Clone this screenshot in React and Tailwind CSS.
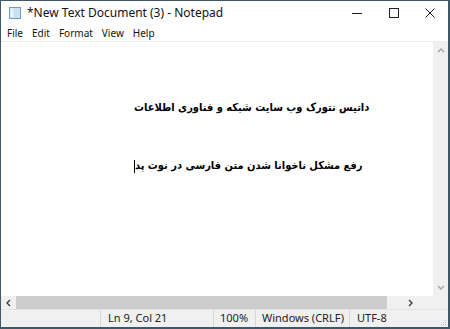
import React from 'react';

const ui = { fontFamily: '"Segoe UI", "Noto Sans", "Liberation Sans", sans-serif' };
const fa = { fontFamily: 'Tahoma, "DejaVu Sans Condensed", "DejaVu Sans", sans-serif' };

const menus = ['File', 'Edit', 'Format', 'View', 'Help'];

const NotepadIcon = () => (
  <svg width="14" height="14" viewBox="0 0 14 14">
    <rect x="1.5" y="1.5" width="11" height="11" fill="#c9e3f2" stroke="#6f9fbf" />
    <rect x="2.5" y="2.5" width="3" height="9" fill="#e8f4fb" />
  </svg>
);

const App = () => {
  return (
    <div className="w-[450px] h-[329px] bg-white flex flex-col border-l border-t border-b-2 border-r-2 border-[#3d5868] overflow-hidden" style={ui}>
      {/* title bar */}
      <div className="h-[24px] flex items-center shrink-0">
        <div className="pl-[7px] pr-[5px] flex items-center">
          <NotepadIcon />
        </div>
        <span className="text-[12px] text-[#111]">*New Text Document (3) - Notepad</span>
        <div className="ml-auto flex items-center h-full">
          <div className="w-[37px] h-full flex items-center justify-center">
            <svg width="10" height="10" viewBox="0 0 10 10"><line x1="0" y1="5.5" x2="10" y2="5.5" stroke="#222" strokeWidth="1" /></svg>
          </div>
          <div className="w-[37px] h-full flex items-center justify-center">
            <svg width="10" height="10" viewBox="0 0 10 10"><rect x="0.5" y="0.5" width="9" height="9" fill="none" stroke="#222" strokeWidth="1" /></svg>
          </div>
          <div className="w-[36px] h-full flex items-center justify-center">
            <svg width="10" height="10" viewBox="0 0 10 10"><path d="M0.5 0.5 L9.5 9.5 M9.5 0.5 L0.5 9.5" stroke="#222" strokeWidth="1" /></svg>
          </div>
        </div>
      </div>

      {/* menu bar */}
      <div className="h-[17px] flex items-center gap-[9px] pl-[6px] text-[10px] text-[#111] shrink-0 border-b border-[#ececec]">
        {menus.map((m) => (
          <span key={m}>{m}</span>
        ))}
      </div>

      {/* editor + vertical scroll */}
      <div className="flex-1 flex min-h-0">
        <div className="flex-1 min-w-0 overflow-hidden">
          <div className="pt-[57px] pl-[133px] text-[11px] font-bold text-black whitespace-nowrap" style={fa}>
            <div className="flex">
              <div dir="rtl" className="leading-[18px]">داتیس نتورک وب سایت شبکه و فناوری اطلاعات</div>
            </div>
            <div className="h-[40px]" />
            <div className="flex items-center">
              <div className="w-px h-[13px] bg-black" />
              <div dir="rtl" className="leading-[18px]">رفع مشکل ناخوانا شدن متن فارسی در نوت پد</div>
            </div>
          </div>
        </div>
        <div className="w-[15px] bg-[#f0f0f0] flex flex-col items-center justify-between py-[6px]">
          <svg width="8" height="5" viewBox="0 0 8 5"><path d="M1 4 L4 1 L7 4" fill="none" stroke="#a3a3a3" strokeWidth="1.3" /></svg>
          <svg width="8" height="5" viewBox="0 0 8 5"><path d="M1 1 L4 4 L7 1" fill="none" stroke="#a3a3a3" strokeWidth="1.3" /></svg>
        </div>
      </div>

      {/* horizontal scroll */}
      <div className="h-[13px] flex shrink-0">
        <div className="flex-1 bg-[#f0f0f0] flex items-center">
          <div className="w-[15px] flex items-center justify-center">
            <svg width="5" height="8" viewBox="0 0 5 8"><path d="M4 1 L1 4 L4 7" fill="none" stroke="#333" strokeWidth="1.3" /></svg>
          </div>
          <div className="w-[371px] h-full bg-[#cdcdcd]" />
          <div className="flex-1 flex items-center justify-center">
            <svg width="5" height="8" viewBox="0 0 5 8"><path d="M1 1 L4 4 L1 7" fill="none" stroke="#333" strokeWidth="1.3" /></svg>
          </div>
        </div>
        <div className="w-[15px] bg-[#f0f0f0]" />
      </div>

      {/* status bar */}
      <div className="h-[18px] flex items-center bg-[#f0f0f0] border-t border-[#e3e3e3] text-[11px] text-[#222] shrink-0 relative">
        <div className="w-[100px] h-full border-r border-[#d7d7d7]" />
        <div className="w-[113px] h-full pl-[7px] flex items-center border-r border-[#d7d7d7]">Ln 9, Col 21</div>
        <div className="w-[42px] h-full pl-[6px] flex items-center border-r border-[#d7d7d7]">100%</div>
        <div className="w-[94px] h-full pl-[6px] flex items-center border-r border-[#d7d7d7]">Windows (CRLF)</div>
        <div className="flex-1 h-full pl-[7px] flex items-center">UTF-8</div>
        <svg className="absolute right-[1px] bottom-[1px]" width="6" height="6" viewBox="0 0 6 6">
          <rect x="4" y="0" width="1" height="1" fill="#bbb" />
          <rect x="2" y="2" width="1" height="1" fill="#bbb" />
          <rect x="4" y="2" width="1" height="1" fill="#bbb" />
          <rect x="0" y="4" width="1" height="1" fill="#bbb" />
          <rect x="2" y="4" width="1" height="1" fill="#bbb" />
          <rect x="4" y="4" width="1" height="1" fill="#bbb" />
        </svg>
      </div>
    </div>
  );
};

export default App;
